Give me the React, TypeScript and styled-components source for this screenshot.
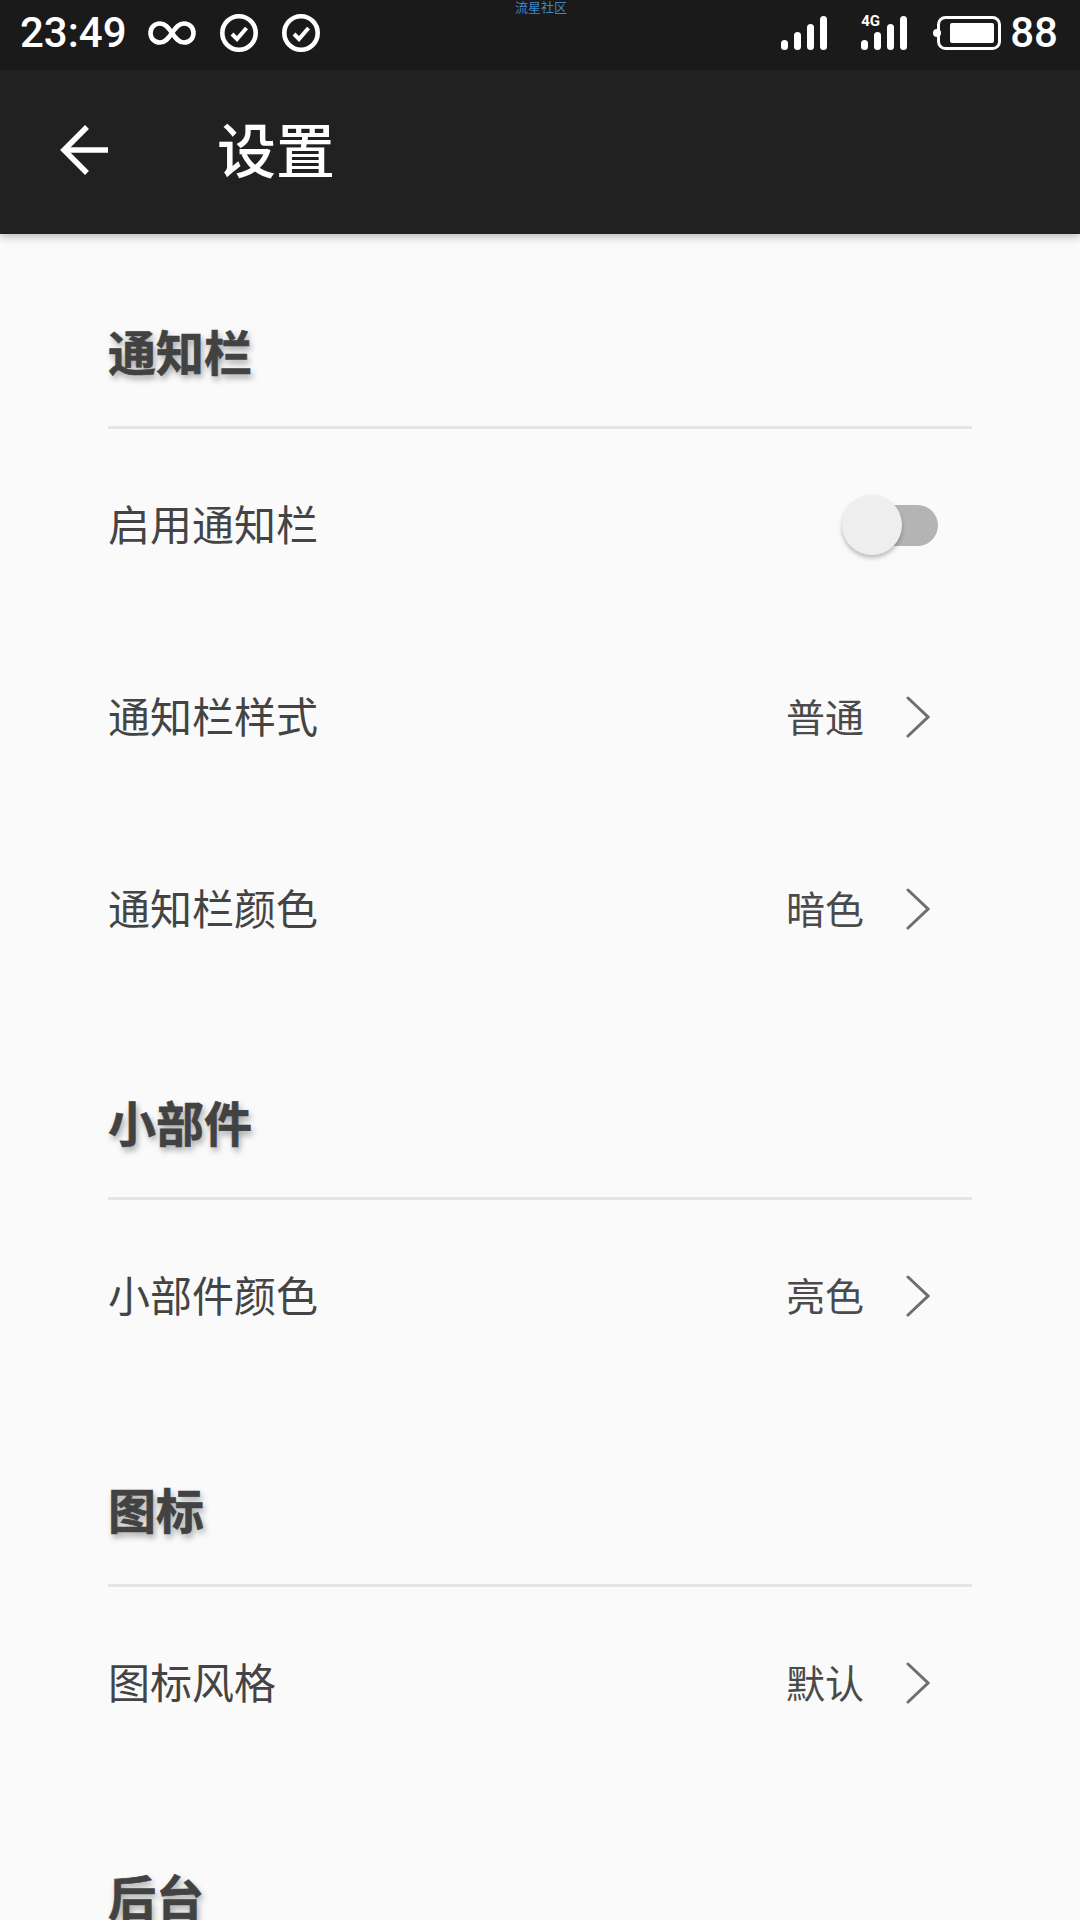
import React from 'react';
import styled, { createGlobalStyle } from 'styled-components';

const GlobalStyle = createGlobalStyle`
  html, body {
    margin: 0;
    padding: 0;
    background: #fafafa;
  }
  * { box-sizing: border-box; }
`;

const CJK = `'Noto Sans CJK SC', 'Noto Sans', sans-serif`;

const Page = styled.div`
  position: relative;
  width: 1080px;
  height: 1920px;
  overflow: hidden;
  background: #fafafa;
  font-family: ${CJK};
`;

const StatusBar = styled.div`
  display: flex;
  align-items: center;
  height: 70px;
  padding: 0 22px 4px 20px;
  background: #1a1a1a;
  color: #fff;
`;

const StatusText = styled.span`
  font-family: Roboto, sans-serif;
  font-size: 42px;
  font-weight: 500;
  line-height: 1;
`;

const BatteryLevel = styled(StatusText)`
  margin-left: 9px;
`;

const StatusGroup = styled.div`
  display: flex;
  align-items: center;
  gap: 24px;
  margin-left: 21px;
`;

const StatusRight = styled.div`
  display: flex;
  align-items: center;
  margin-left: auto;
`;

const Watermark = styled.span`
  position: absolute;
  top: 0;
  left: 515px;
  font-size: 13px;
  line-height: 13px;
  color: #3f86c9;
`;

const Toolbar = styled.header`
  position: relative;
  display: flex;
  align-items: center;
  height: 164px;
  padding: 0 0 4px 60px;
  background: #212121;
  box-shadow: 0 3px 8px rgba(0, 0, 0, 0.25);
  color: #fff;
`;

const Title = styled.h1`
  margin: 0 0 0 109px;
  padding-bottom: 6px;
  font-size: 59px;
  font-weight: 500;
  line-height: 1;
`;

const SectionHeader = styled.div`
  height: 195px;
  margin: 0 108px;
  padding-top: 80px;
  border-bottom: 3px solid #e2e4e6;
  font-size: 48px;
  font-weight: 700;
  line-height: 72px;
  color: #424242;
  -webkit-text-stroke: 0.6px #424242;
  text-shadow: 2px 4px 6px rgba(0, 0, 0, 0.35);
`;

const Row = styled.div<{ $pad: number }>`
  display: flex;
  align-items: center;
  justify-content: space-between;
  height: 192px;
  margin: 0 108px;
  padding-right: ${(p) => p.$pad}px;
`;

const Label = styled.span`
  padding-bottom: 6px;
  font-size: 42px;
  color: #444;
`;

const ValueWrap = styled.div`
  display: flex;
  align-items: center;
  gap: 42px;
`;

const Value = styled.span`
  padding-bottom: 5px;
  font-size: 39px;
  color: #4a4a4a;
`;

const Track = styled.div`
  position: relative;
  width: 88px;
  height: 41px;
  border-radius: 21px;
  background: #b4b4b4;
`;

const Thumb = styled.div`
  position: absolute;
  left: -8px;
  top: -10px;
  width: 60px;
  height: 60px;
  border-radius: 50%;
  background: #eeeeee;
  box-shadow: 0 3px 4px rgba(0, 0, 0, 0.25);
`;

const InfinityIcon = () => (
  <svg width="48" height="24" viewBox="0 0 48 24" fill="none" stroke="#fff" strokeWidth="4.6">
    <path d="M24 12C20 6 17 2.5 12 2.5C6 2.5 2.5 7 2.5 12C2.5 17 6 21.5 12 21.5C17 21.5 20 18 24 12C28 6 31 2.5 36 2.5C42 2.5 45.5 7 45.5 12C45.5 17 42 21.5 36 21.5C31 21.5 28 18 24 12Z" />
  </svg>
);

const CheckCircle = () => (
  <svg width="38" height="38" viewBox="0 0 38 38" fill="none" stroke="#fff">
    <circle cx="19" cy="19" r="16.7" strokeWidth="4.6" />
    <path d="M12 20L17 25L26.5 14" strokeWidth="4" />
  </svg>
);

const Signal = () => (
  <svg width="46" height="34" viewBox="0 0 46 34" fill="#fff">
    <rect x="0" y="24" width="7" height="10" rx="3.5" />
    <rect x="13" y="16" width="7" height="18" rx="3.5" />
    <rect x="26" y="8" width="7" height="26" rx="3.5" />
    <rect x="39" y="0" width="7" height="34" rx="3.5" />
  </svg>
);

const FourGLabel = styled.span`
  position: absolute;
  left: 0;
  top: -2px;
  font-family: Roboto, sans-serif;
  font-size: 15px;
  font-weight: 700;
  line-height: 15px;
  color: #fff;
`;

const SignalBox = styled.div<{ $left: number }>`
  position: relative;
  display: flex;
  margin-left: ${(p) => p.$left}px;
`;

const Battery = () => (
  <svg width="68" height="34" viewBox="0 0 68 34" fill="#fff">
    <rect x="5.5" y="1.5" width="61" height="31" rx="7" fill="none" stroke="#fff" strokeWidth="3" />
    <rect x="17" y="7" width="44" height="20" rx="2" />
    <circle cx="4" cy="17" r="4" />
  </svg>
);

const BackArrow = () => (
  <svg width="48" height="50" viewBox="0 0 48 50" fill="none" stroke="#fff" strokeWidth="5.5">
    <path d="M48 25H4" />
    <path d="M27 2L4 25L27 48" />
  </svg>
);

const Chevron = () => (
  <svg width="24" height="42" viewBox="0 0 24 42" fill="none" stroke="#6f6f6f" strokeWidth="3" strokeLinecap="round">
    <path d="M2 2L22 21L2 40" />
  </svg>
);

const ValueRow = ({ label, value }: { label: string; value: string }) => (
  <Row $pad={42}>
    <Label>{label}</Label>
    <ValueWrap>
      <Value>{value}</Value>
      <Chevron />
    </ValueWrap>
  </Row>
);

export default function App() {
  return (
    <Page>
      <GlobalStyle />
      <StatusBar>
        <StatusText>23:49</StatusText>
        <StatusGroup>
          <InfinityIcon />
          <CheckCircle />
          <CheckCircle />
        </StatusGroup>
        <StatusRight>
          <Signal />
          <SignalBox $left={34}>
            <Signal />
            <FourGLabel>4G</FourGLabel>
          </SignalBox>
          <SignalBox $left={26}>
            <Battery />
          </SignalBox>
          <BatteryLevel>88</BatteryLevel>
        </StatusRight>
      </StatusBar>
      <Watermark>流星社区</Watermark>
      <Toolbar>
        <BackArrow />
        <Title>设置</Title>
      </Toolbar>

      <SectionHeader>通知栏</SectionHeader>
      <Row $pad={34}>
        <Label>启用通知栏</Label>
        <Track>
          <Thumb />
        </Track>
      </Row>
      <ValueRow label="通知栏样式" value="普通" />
      <ValueRow label="通知栏颜色" value="暗色" />

      <SectionHeader>小部件</SectionHeader>
      <ValueRow label="小部件颜色" value="亮色" />

      <SectionHeader>图标</SectionHeader>
      <ValueRow label="图标风格" value="默认" />

      <SectionHeader>后台</SectionHeader>
    </Page>
  );
}
